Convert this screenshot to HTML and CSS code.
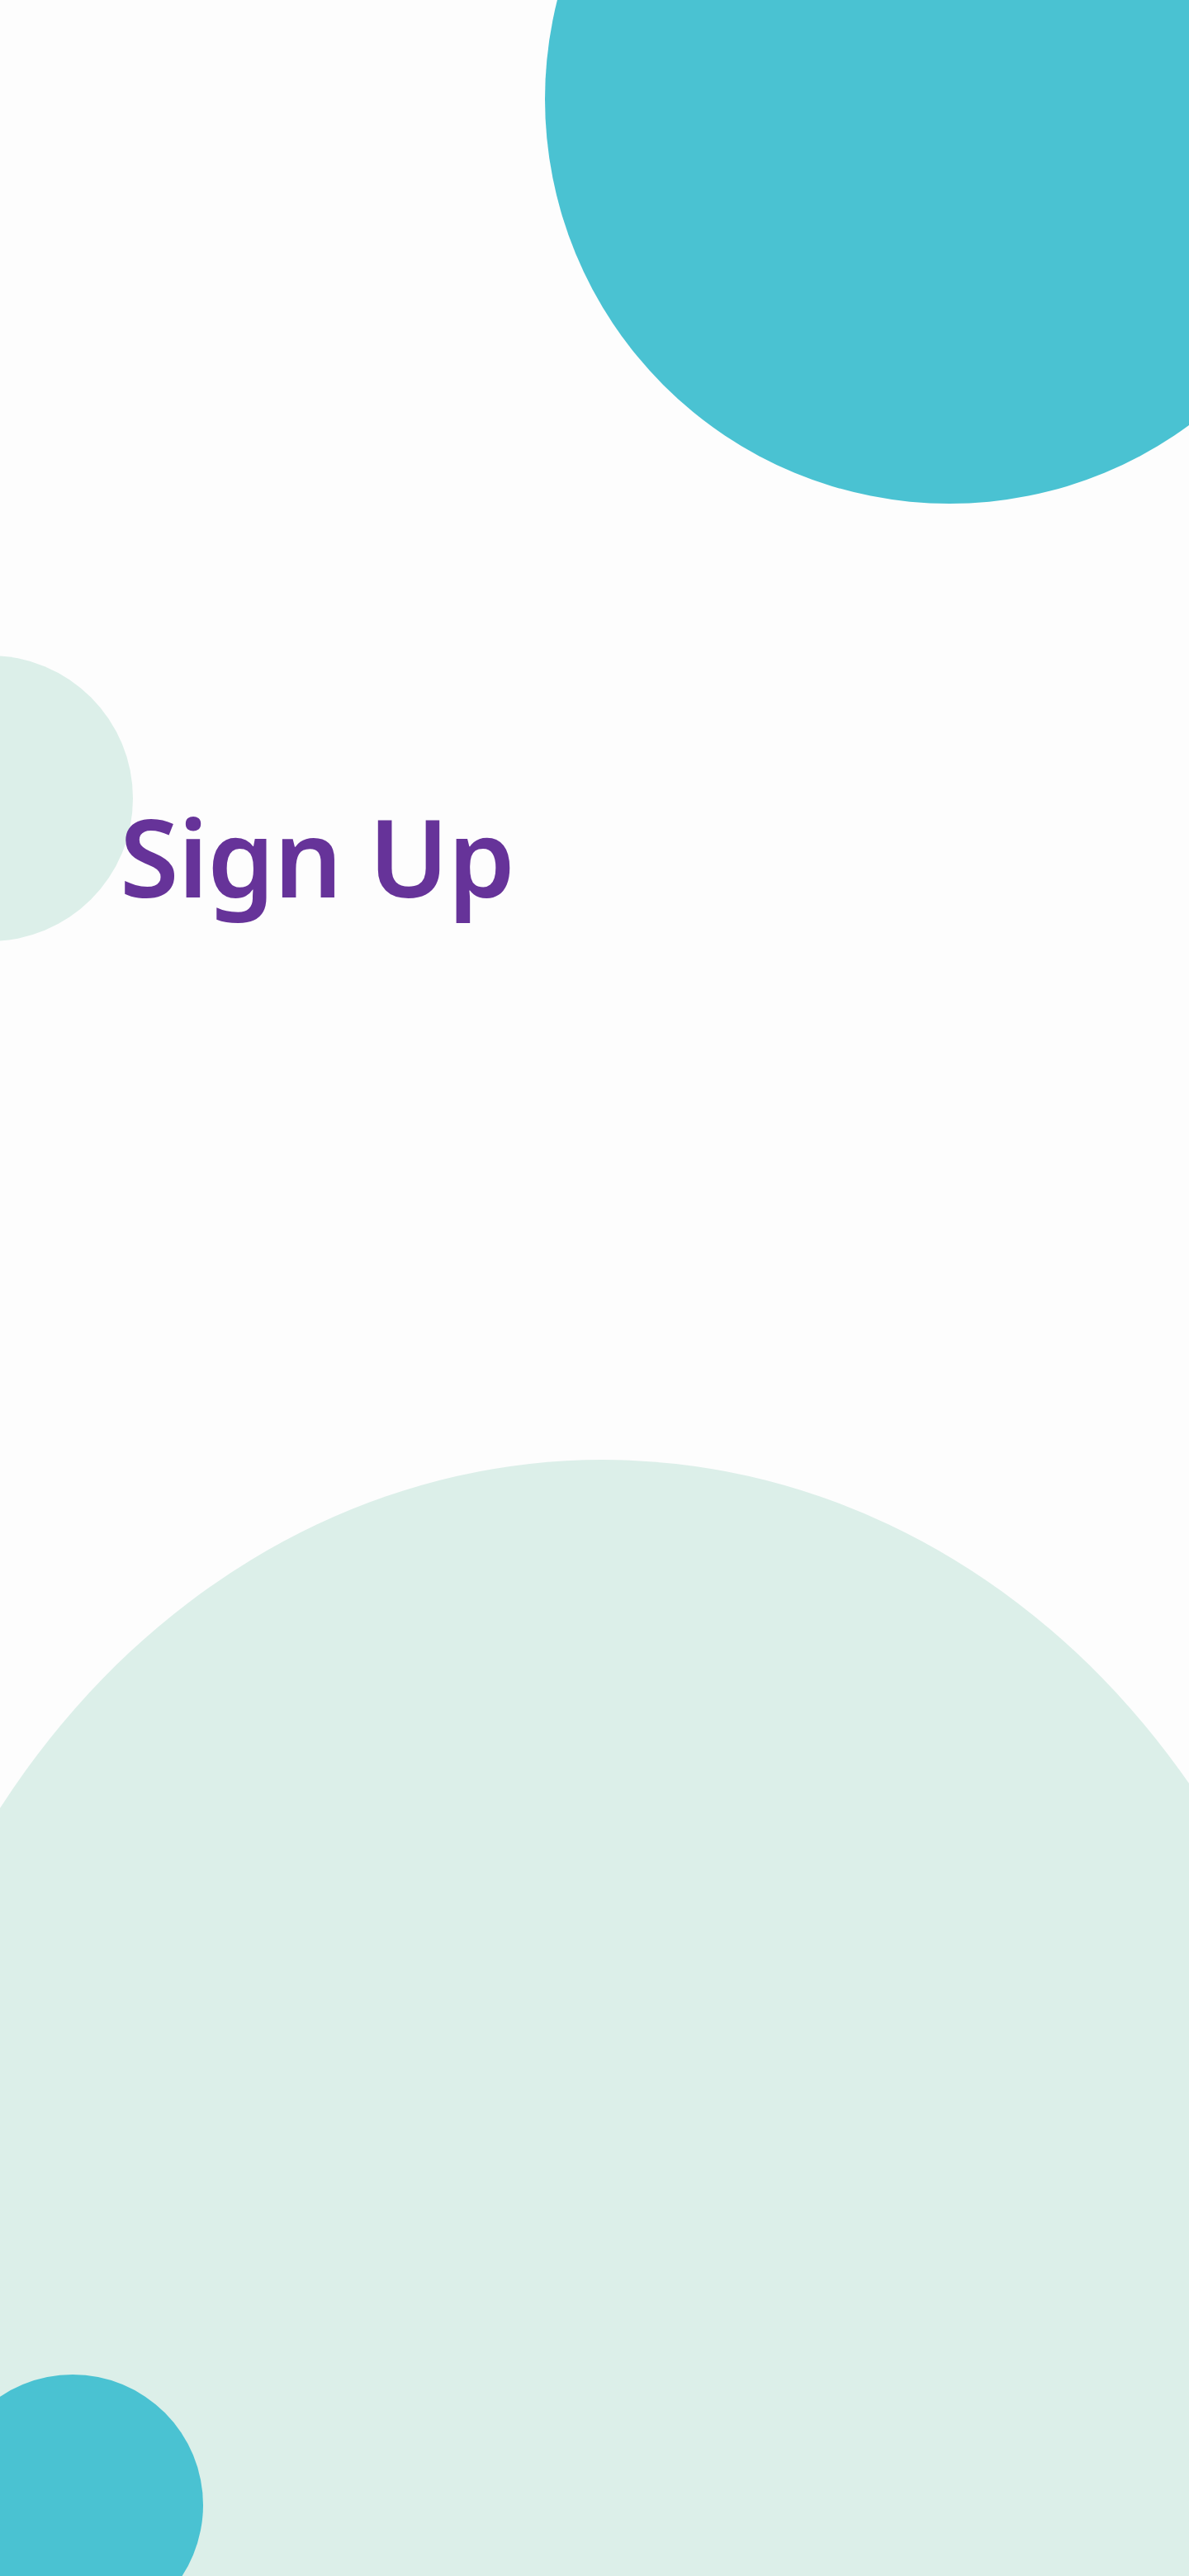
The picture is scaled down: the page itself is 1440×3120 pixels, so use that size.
FILE: index.html
```html
<!DOCTYPE html>
<html lang="en">
<head>
<meta charset="utf-8">
<title>Sign Up</title>
<link rel="stylesheet" href="styles.css">
</head>
<body>
<div class="page">
  <div class="blob blob-top-right"></div>
  <div class="blob blob-left"></div>
  <div class="blob blob-bottom"></div>
  <div class="blob blob-bottom-left"></div>
  <main class="content">
    <h1 class="title">Sign Up</h1>
  </main>
</div>
</body>
</html>
```
FILE: styles.css
```css
html, body {
  margin: 0;
  padding: 0;
  background: #fdfdfd;
}

.page {
  position: relative;
  width: 1440px;
  height: 3120px;
  overflow: hidden;
  background: #fdfdfd;
}

.blob {
  position: absolute;
  border-radius: 50%;
}

.blob-top-right {
  left: 660px;
  top: -370px;
  width: 980px;
  height: 980px;
  background: #4ac2d2;
}

.blob-left {
  left: -185px;
  top: 794px;
  width: 346px;
  height: 346px;
  background: #dcefe9;
}

.blob-bottom {
  left: -174px;
  top: 1768px;
  width: 1808px;
  height: 2058px;
  background: #dcefe9;
}

.blob-bottom-left {
  left: -70px;
  top: 2876px;
  width: 316px;
  height: 316px;
  background: #4ac2d2;
}

.content {
  position: relative;
  z-index: 1;
  padding: 972px 0 0 145px;
}

.title {
  margin: 0;
  font-family: "Noto Sans", "Open Sans", sans-serif;
  font-weight: 600;
  font-size: 130px;
  line-height: 1;
  letter-spacing: -1px;
  color: #663399;
}
```
